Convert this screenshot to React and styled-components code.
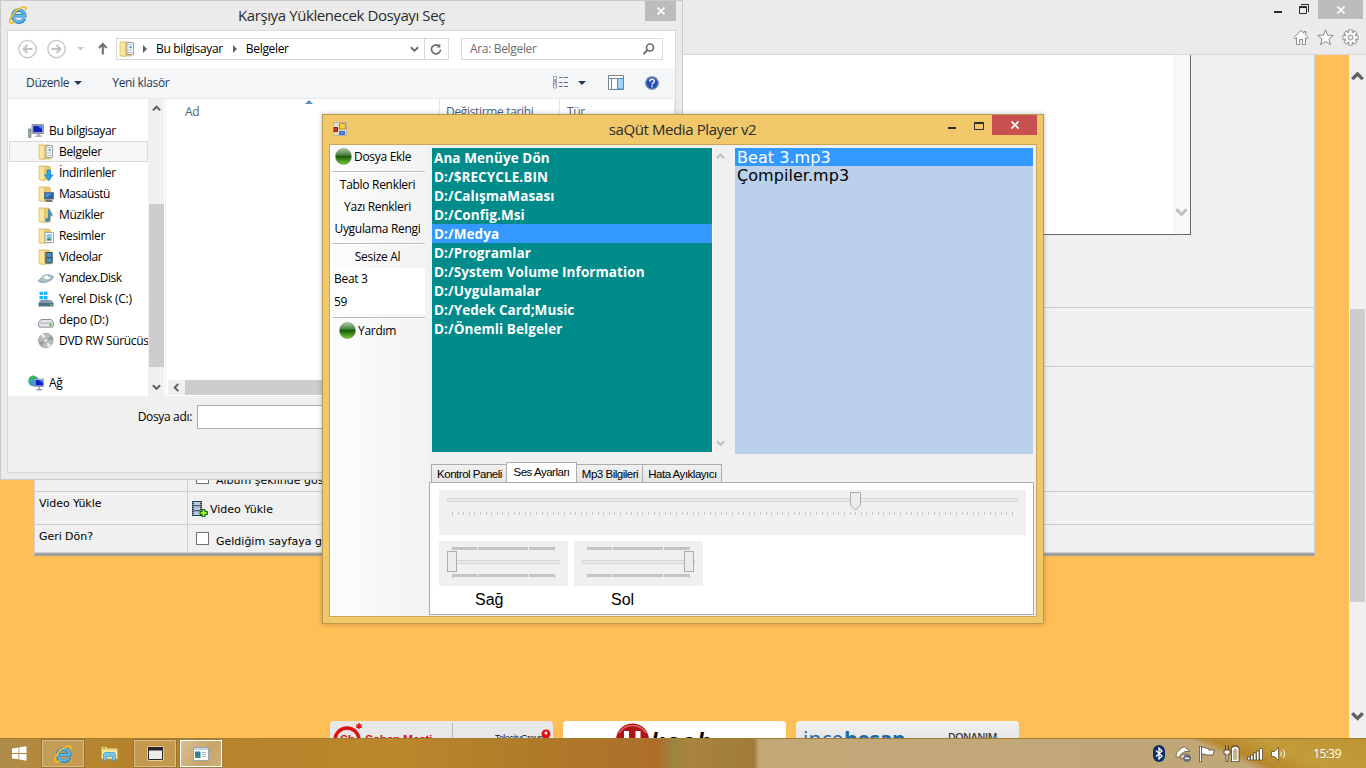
import React, { useState } from 'react'
import styled, { createGlobalStyle, css } from 'styled-components'

const GlobalStyle = createGlobalStyle`
    * {
        box-sizing: border-box;
    }
    body {
        margin: 0;
        overflow: hidden;
        font-family: "Open Sans", "Noto Sans", sans-serif;
        font-size: 12px;
        letter-spacing: -0.33px;
        color: #000;
        cursor: default;
    }
    svg {
        display: block;
        flex: none;
    }
`

const Desktop = styled.div`
    position: relative;
    width: 1366px;
    height: 768px;
    overflow: hidden;
    display: flex;
    flex-direction: column;
    white-space: nowrap;
`

/* ---------- browser ---------- */

const Browser = styled.div`
    height: 738px;
    display: flex;
    flex-direction: column;
    background: #ebebeb;
`
const BrowserTop = styled.div`
    height: 55px;
    flex: none;
    border-bottom: 1px solid #d9d9d9;
    display: flex;
    flex-direction: column;
    align-items: flex-end;
`
const BrowserButtons = styled.div`
    height: 19px;
    display: flex;
    align-items: flex-start;
    padding-right: 3px;
`
const CloseButton = styled.div`
    width: ${props => props.$width}px;
    height: ${props => props.$height}px;
    background: ${props => props.$color || '#bcbcbc'};
    display: flex;
    align-items: center;
    justify-content: center;
`
const BrowserTools = styled.div`
    display: flex;
    gap: 8px;
    padding: 10px 7px 0 0;
`
const Viewport = styled.div`
    flex: 1;
    min-height: 0;
    display: flex;
`
const Page = styled.div`
    flex: 1;
    min-width: 0;
    overflow: hidden;
    background: #ffbf57;
    display: flex;
    flex-direction: column;
`
const Table = styled.div`
    width: 1281px;
    height: 501px;
    flex: none;
    margin-left: 34px;
    background: #f0f0f0;
    border: solid #cfcfcf;
    border-width: 0 1px 0 1px;
    border-bottom: 3px solid #a0a0a0;
    font-family: "DejaVu Sans", Verdana, sans-serif;
    font-size: 11px;
    letter-spacing: 0;
`
const TableRow = styled.div`
    display: flex;
    height: ${props => props.$height}px;
    border-bottom: 1px solid #cfcfcf;
`
const TableLabel = styled.div`
    width: 153px;
    padding: 5px 0 0 4px;
    border-right: 1px solid #cfcfcf;
    letter-spacing: -0.05px;
`
const TableCell = styled.div`
    flex: 1;
    display: flex;
    align-items: ${props => props.$align || 'flex-start'};
    padding: ${props => props.$padding || '0'};
`
const CellText = styled.span`
    margin: ${props => props.$margin || '0'};
`
const TextArea = styled.div`
    width: 999px;
    height: 180px;
    margin-left: 4px;
    background: #fff;
    border: solid #696969;
    border-width: 0 1px 1px 0;
    display: flex;
    justify-content: flex-end;
`
const TextAreaScroll = styled.div`
    width: 17px;
    background: #f8f8f8;
    display: flex;
    align-items: flex-end;
    justify-content: center;
    padding: 0 1px 15px 0;
`
const CheckBox = styled.span`
    width: 13px;
    height: 13px;
    flex: none;
    background: #fff;
    border: 1px solid #707070;
    margin-right: 7px;
`
const PageScroll = styled.div`
    width: 17px;
    background: #f0f0f0;
    display: flex;
    flex-direction: column;
    align-items: center;
    padding: 15px 0;
`
const PageThumb = styled.div`
    width: 15px;
    height: 293px;
    margin-top: 226px;
    margin-bottom: auto;
    background: #cdcdcd;
`
const Sponsors = styled.div`
    display: flex;
    gap: 10px;
    margin: 165px 0 0 330px;
`
const Sponsor = styled.div`
    width: 223px;
    height: 60px;
    flex: none;
    border-radius: 4px;
    background: ${props => props.$background};
`

/* ---------- file dialog ---------- */

const Dialog = styled.div`
    position: absolute;
    left: 0;
    top: 0;
    width: 683px;
    height: 480px;
    background: #ebebeb;
    border: 1px solid #cacaca;
    padding: 0 6px 6px;
    display: flex;
    flex-direction: column;
`
const DialogTitle = styled.div`
    height: 29px;
    flex: none;
    display: flex;
    align-items: flex-start;
`
const Caption = styled.div`
    flex: 1;
    text-align: center;
    padding-left: ${props => props.$shift}px;
    font-size: 15px;
    letter-spacing: -0.4px;
    line-height: 28px;
    color: #2b2b2b;
`
const DialogClient = styled.div`
    flex: 1;
    min-height: 0;
    border: 1px solid #d9d9d9;
    background: #f0f0f0;
    display: flex;
    flex-direction: column;
`
const AddressBar = styled.div`
    height: 37px;
    flex: none;
    background: #fff;
    display: flex;
    align-items: center;
    padding: 0 12px 1px 10px;
`
const Field = styled.div`
    display: flex;
    align-items: center;
    height: 22px;
    width: ${props => props.$width}px;
    border: 1px solid #d9d9d9;
    background: #fff;
`
const Crumb = styled.span`
    margin: 0 8px 1px 7px;
`
const RefreshCell = styled.div`
    width: 25px;
    height: 20px;
    border-left: 1px solid #d9d9d9;
    display: flex;
    align-items: center;
    justify-content: center;
`
const SearchText = styled.span`
    flex: 1;
    padding: 0 0 1px 8px;
    color: #6d6d6d;
`
const CommandBar = styled.div`
    height: 31px;
    flex: none;
    display: flex;
    align-items: center;
    padding: 0 16px 0 18px;
    background: #f5f6f7;
    border-bottom: 1px solid #e5e8eb;
    color: #1e395b;
`
const CommandText = styled.span`
    margin-right: ${props => props.$gap || 0}px;
    padding-bottom: 1px;
`
const CommandIcons = styled.svg`
    margin-left: auto;
`
const DialogBody = styled.div`
    height: 297px;
    flex: none;
    display: flex;
    background: #fff;
`
const Tree = styled.div`
    width: 141px;
    overflow: hidden;
    padding: 21px 0 0 1px;
`
const TreeRow = styled.div`
    display: flex;
    align-items: center;
    gap: 5px;
    width: 139px;
    height: 21px;
    margin-top: ${props => props.$top || 0}px;
    padding-left: ${props => props.$root ? 18 : 28}px;
    border: 1px solid ${props => props.$selected ? '#dadada' : 'transparent'};
    background: ${props => props.$selected ? '#f7f7f7' : 'transparent'};
    letter-spacing: ${props => props.$spacing || -0.33}px;
`
const TreeScroll = styled.div`
    width: 16px;
    background: #f0f0f0;
    display: flex;
    flex-direction: column;
    align-items: center;
    padding: 5px 0 4px;
`
const TreeThumb = styled.div`
    width: 15px;
    height: 163px;
    margin-top: auto;
    margin-bottom: 16px;
    background: #cdcdcd;
`
const FileArea = styled.div`
    flex: 1;
    border-left: 1px solid #f0f0f0;
    margin-left: 1px;
    display: flex;
    flex-direction: column;
    justify-content: space-between;
`
const FileHeader = styled.div`
    display: flex;
    color: #4c607a;
`
const HeaderCell = styled.div`
    width: ${props => props.$width}px;
    height: 25px;
    padding-left: ${props => props.$indent || 6}px;
    line-height: 26px;
    border-right: 1px solid #e5e8eb;
    display: flex;
`
const SortMark = styled.svg`
    margin: 1px 0 0 106px;
`
const FileScroll = styled.div`
    height: 16px;
    display: flex;
    align-items: flex-start;
    margin-left: 2px;
    background: #f0f0f0;
    border-bottom: 1px solid #fff;
`
const FileScrollArrow = styled.div`
    width: 17px;
    height: 15px;
    display: flex;
    align-items: center;
    justify-content: center;
`
const FileThumb = styled.div`
    flex: 1;
    height: 15px;
    background: #cdcdcd;
`
const DialogFooter = styled.div`
    display: flex;
    align-items: center;
    justify-content: flex-end;
    padding: 9px 12px 0 0;
    gap: 5px;
`
const NameLabel = styled.span`
    padding-bottom: 2px;
`
const NameInput = styled.div`
    width: 466px;
    height: 24px;
    background: #fff;
    border: 1px solid #abadb3;
`

/* ---------- media player ---------- */

const Player = styled.div`
    position: absolute;
    left: 322px;
    top: 114px;
    width: 722px;
    height: 510px;
    background: #f0c869;
    border: 1px solid #b99a4c;
    box-shadow: 0 0 5px rgba(0, 0, 0, 0.25);
    padding: 0 6px 6px;
    display: flex;
    flex-direction: column;
`
const PlayerTitle = styled.div`
    height: 29px;
    flex: none;
    display: flex;
    align-items: flex-start;
`
const PlayerClient = styled.div`
    flex: 1;
    min-height: 0;
    border: 1px solid #c9a654;
    background: #f0f0f0;
    display: flex;
`
const MenuStrip = styled.div`
    width: 99px;
    padding-top: 1px;
    background: linear-gradient(90deg, #fdfdfd, #f2f2f2);
    letter-spacing: -0.3px;
`
const MenuItem = styled.div`
    width: 95px;
    height: ${props => props.$height || 22}px;
    display: flex;
    align-items: center;
    justify-content: ${props => props.$left ? 'flex-start' : 'center'};
    gap: 2px;
    padding: 0 0 2px ${props => props.$left || 0}px;
    margin-left: ${props => props.$shift || 0}px;
    ${props => props.$box && css`
        background: #fff;
    `}
`
const MenuLine = styled.div`
    width: 93px;
    height: 1px;
    margin: 3px 0 2px 2px;
    background: #bdbdbd;
    box-shadow: 0 1px 0 #fff;
`
const Main = styled.div`
    flex: 1;
    display: flex;
    flex-direction: column;
    padding: 3px 2px 0 0;
`
const Lists = styled.div`
    display: flex;
    height: 306px;
    margin-left: 3px;
`
const FolderList = styled.div`
    width: 281px;
    height: 304px;
    background: #008b8b;
    border-right: 1px solid #fff;
    font-size: 13.5px;
    font-weight: 700;
    letter-spacing: 0.08px;
    color: #fff;
`
const FolderRow = styled.div`
    height: 19px;
    line-height: 21px;
    padding-left: 2px;
    background: ${props => props.$selected ? '#3399ff' : 'transparent'};
`
const ListScroll = styled.div`
    width: 16px;
    height: 304px;
    display: flex;
    flex-direction: column;
    align-items: center;
    justify-content: space-between;
    padding: 4px 1px 4px 0;
`
const SongList = styled.div`
    width: 298px;
    height: 306px;
    margin-left: 6px;
    background: #bad0eb;
    font-family: "DejaVu Sans", Verdana, sans-serif;
    font-size: 16px;
    letter-spacing: 0.05px;
`
const SongRow = styled.div`
    height: 18px;
    line-height: 20px;
    padding-left: 2px;
    background: ${props => props.$selected ? '#3399ff' : 'transparent'};
    color: ${props => props.$selected ? '#fff' : '#000'};
`
const Tabs = styled.div`
    display: flex;
    align-items: flex-end;
    height: 28px;
    padding-left: 2px;
    font-family: "Liberation Sans", Arial, sans-serif;
    font-size: 11.5px;
    letter-spacing: -0.48px;
`
const Tab = styled.div`
    width: ${props => props.$width}px;
    height: 18px;
    padding-left: 1px;
    border: 1px solid #acacac;
    border-width: 1px 1px 0 ${props => props.$first ? 1 : 0}px;
    background: linear-gradient(#f0f0f0, #e5e5e5);
    text-align: center;
    line-height: 19px;
    ${props => props.$active && css`
        height: 21px;
        padding-left: 0;
        margin-bottom: -1px;
        background: #fff;
        border-left-width: 1px;
        margin-left: -1px;
    `}
`
const TabPage = styled.div`
    height: 133px;
    width: 605px;
    background: #fff;
    border: 1px solid #acacac;
    padding: 7px 7px 0 9px;
`
const TrackBar = styled.div`
    width: ${props => props.$width}px;
    height: 45px;
    background: #f0f0f0;
`
const Channels = styled.div`
    display: flex;
    gap: 6px;
    margin-top: 6px;
`
const Channel = styled.div`
    display: flex;
    flex-direction: column;
`
const ChannelName = styled.div`
    padding: 4px 0 0 ${props => props.$indent}px;
    font-family: "Liberation Sans", Arial, sans-serif;
    font-size: 16px;
    line-height: 19px;
    letter-spacing: 0;
`

/* ---------- taskbar ---------- */

const Taskbar = styled.div`
    height: 30px;
    flex: none;
    display: flex;
    align-items: center;
    border-top: 1px solid #a17c32;
    background:
        linear-gradient(24deg, transparent 510px, #b8872c 518px, #c39c3a 540px, #bd9432 100%) no-repeat,
        linear-gradient(90deg, #ae8c4c 0, #b58735 60px, #b5822b 130px, #ba872c 400px, #b07c28 520px, #ad6e2c 660px,
        #9c8340 672px, #a8843f 690px, #a07b3a 754px, #c2a877 759px, #c0a778 1366px);
`
const StartButton = styled.div`
    width: 41px;
    display: flex;
    justify-content: center;
    padding-right: 2px;
`
const TaskButton = styled.div`
    width: 44px;
    height: 29px;
    margin-right: 2px;
    display: flex;
    align-items: center;
    justify-content: center;
    ${props => props.$open && css`
        border: 1px solid rgba(110, 75, 20, 0.5);
        background: rgba(255, 235, 200, 0.22);
        box-shadow: inset 0 0 0 1px #dcbc86;
    `}
    ${props => props.$active && css`
        background: linear-gradient(120deg, #dac294, #c8a468 60%, #d0b078);
        box-shadow: inset 0 0 0 1px #fff;
    `}
`
const Tray = styled.div`
    margin-left: auto;
    display: flex;
    align-items: center;
    gap: 7px;
    padding-right: 25px;
`
const Clock = styled.span`
    color: #fff;
    margin-left: 19px;
    letter-spacing: -0.55px;
`

/* ---------- icons ---------- */

const Chevron = ({ dir = 'down', size = 8, color = '#606060', width = 2 }) => {
    const d = {
        down: 'M1 2.5 L5 6.5 L9 2.5',
        up: 'M1 7 L5 3 L9 7',
        left: 'M7 1 L3 5 L7 9',
    }[dir]
    return (
        <svg width={size} height={size} viewBox="0 0 10 10" fill="none" stroke={color} strokeWidth={width}>
            <path d={d} />
        </svg>
    )
}

const Triangle = ({ right, color = '#1e395b' }) => (
    <svg width="8" height="8" viewBox="0 0 8 8" fill={color}>
        <path d={right ? 'M2 0 L6 4 L2 8z' : 'M0 2 H8 L4 6z'} />
    </svg>
)

const Cross = ({ size = 8 }) => (
    <svg width={size} height={size} viewBox="0 0 8 8" stroke="#fff" strokeWidth="1.7">
        <path d="M.5 .5 L7.5 7.5 M7.5 .5 L.5 7.5" />
    </svg>
)

const WindowButtons = ({ restore }) => (
    restore
        ? <svg width="44" height="19" viewBox="0 0 44 19" fill="none" stroke="#2b2b2b">
            <path d="M0 12 H8" strokeWidth="2" />
            <path d="M25.500 6.500 H32.500 V13.500 H25.500z M25 7.500 H33" />
            <path d="M27 4.500 H34.500 V12" />
        </svg>
        : <svg width="45" height="19" viewBox="0 0 45 19" fill="none" stroke="#2b2b2b">
            <path d="M1 13 H9" strokeWidth="2" />
            <path d="M27.500 7.500 H36.500 V14.500 H27.500z M27 8.500 H37" />
        </svg>
)

const IeIcon = ({ size = 18 }) => (
    <svg width={size} height={size} viewBox="0 0 18 18" fill="none">
        <path d="M15.300 12.300 A6 6 0 1 1 15.700 9.800 H6" stroke="#2a86c8" strokeWidth="3.600" />
        <path d="M15 12.300 A5.900 5.900 0 1 1 15.600 9.800 H6" stroke="#67bfec" strokeWidth="1.800" />
        <path d="M1.300 16.500 C-.8 13 5.500 3.800 13.500 1.300 C16.500 .5 17.500 2 16.500 4.500" stroke="#f3bd1c" strokeWidth="1.700" />
        <path d="M1.200 16.500 C2.200 17.500 4.500 16.800 6 15.700" stroke="#f3bd1c" strokeWidth="1.500" />
    </svg>
)

const HomeIcon = () => (
    <svg width="16" height="17" viewBox="0 0 16 17" fill="#fff" stroke="#8b8b8b">
        <path d="M8 1.500 L.8 8.500 L2 9.800 L3.500 8.800 V15.500 H6.500 V10.500 H9.500 V15.500 H12.500 V8.800 L14 9.800 L15.200 8.500 L12.800 6.200 V2.500 H11 V4.300z" />
    </svg>
)

const StarIcon = () => (
    <svg width="17" height="17" viewBox="0 0 17 17" fill="#fff" stroke="#8b8b8b">
        <path d="M8.500 .8 L10.600 6.200 L16.300 6.400 L11.900 10 L13.500 15.700 L8.500 12.500 L3.500 15.700 L5.100 10 L.7 6.400 L6.400 6.200z" />
    </svg>
)

const GearIcon = () => (
    <svg width="17" height="17" viewBox="0 0 17 17">
        <g stroke="#8b8b8b" strokeWidth="4.400">
            <path d="M8.500 .5 V16.500 M.5 8.500 H16.500 M2.900 2.900 L14.100 14.100 M14.100 2.900 L2.900 14.100" />
        </g>
        <circle cx="8.500" cy="8.500" r="6" fill="#8b8b8b" />
        <g stroke="#fff" strokeWidth="2.400">
            <path d="M8.500 1.300 V15.700 M1.300 8.500 H15.700 M3.400 3.400 L13.600 13.600 M13.600 3.400 L3.400 13.600" />
        </g>
        <circle cx="8.500" cy="8.500" r="5" fill="#fff" />
        <circle cx="8.500" cy="8.500" r="2.500" fill="#ebebeb" stroke="#8b8b8b" />
    </svg>
)

const NavIcons = () => (
    <svg width="98" height="22" viewBox="0 0 98 22" fill="none" stroke="#c3c3c3">
        <circle cx="9.500" cy="11" r="8.700" strokeWidth="1.300" />
        <path d="M14.500 11 H5.500 M9.500 7 L5.500 11 L9.500 15" strokeWidth="2" />
        <circle cx="38.500" cy="11" r="8.700" strokeWidth="1.300" />
        <path d="M33.500 11 H42.500 M38.500 7 L42.500 11 L38.500 15" strokeWidth="2" />
        <path d="M59 9 H66 L62.500 12.500z" fill="#c9c9c9" stroke="none" />
        <path d="M84.800 16.500 V6.500 M81 10 L84.800 6 L88.600 10" stroke="#6d6d6d" strokeWidth="2" />
    </svg>
)

const FolderIcon = ({ kind }) => (
    <svg width="16" height="16" viewBox="0 0 16 16">
        <path d="M1.500 1 H11 L12.500 2.500 V15 H1.500z" fill="#e8cb70" stroke="#cfae55" strokeWidth=".6" />
        <path d="M1 1 L6.500 1.500 V15.500 L1 14.500z" fill="#f8e5a0" stroke="#d8b95f" strokeWidth=".7" />
        {kind === 'doc' && <g>
            <path d="M8 1.500 H14.500 V13.500 H8z" fill="#fbfbfb" stroke="#a3a39b" />
            <path d="M9 3.500 H13.500 M9 9 H13.500 M9 11.500 H13.500 M9 6 H10.500" stroke="#b4bec8" />
            <path d="M10.800 5.200 H12.800 V7.200 H10.800z" fill="#3a8ee0" />
        </g>}
        {kind === 'down' && <path d="M9 5 H12.500 V10 H15 L10.700 15.500 L6.500 10 H9z" fill="#2aa5f0" stroke="#147ac4" strokeWidth=".7" />}
        {kind === 'desk' && <g>
            <path d="M6.500 6.500 H15.500 V13 H6.500z" fill="#2a62a8" stroke="#5b6d80" strokeWidth=".8" />
            <path d="M7.500 7.500 H14 L8 12z" fill="#4c93de" />
            <path d="M7.500 15 H14.500" stroke="#4a5868" strokeWidth="1.500" />
        </g>}
        {kind === 'music' && <path d="M10.500 2 C11 5 15 5 14 9.500 C13.800 8 12.500 7.500 11.900 7.500 V12.500 C11.500 15.500 7 15.500 7.500 12.800 C7.800 11.300 9.500 11 10.500 11.500z" fill="#2e93dd" stroke="#1b6bb0" strokeWidth=".5" />}
        {kind === 'pic' && <g>
            <path d="M7 4.500 H15.500 V14.500 H7z" fill="#fff" stroke="#9aa0a6" strokeWidth=".9" />
            <path d="M8.500 6 H14 V12.500 H8.500z" fill="#8cc9ea" />
            <path d="M8.500 12.500 L10.500 9.500 L14 12.500z" fill="#3f8f62" />
        </g>}
        {kind === 'video' && <g>
            <path d="M7 3 H15 V14.500 H7z" fill="#3d434b" />
            <path d="M8.800 4 H13.200 V8.200 H8.800z M8.800 9.300 H13.200 V13.500 H8.800z" fill="#3f94cf" />
            <path d="M7.800 3.500 V14.500 M14.200 3.500 V14.500" stroke="#e6e6e6" strokeDasharray="1 1" />
        </g>}
    </svg>
)

const PcIcon = () => (
    <svg width="16" height="16" viewBox="0 0 16 16">
        <path d="M.5 6 H3 V14.500 H.5z" fill="#a5acb4" stroke="#6d7680" strokeWidth=".7" />
        <path d="M1.200 8 H2.500" stroke="#3fae4a" />
        <path d="M4 1.500 H15.500 V10.500 H4z" fill="#c5ccd4" stroke="#7a858f" strokeWidth=".8" />
        <path d="M5.200 2.700 H14.300 V9.300 H5.200z" fill="#1423b4" />
        <path d="M9 2.700 H14.300 V6.500z" fill="#4e77e8" />
        <path d="M9 11 H12 V12.500 H14 V14 H7 V12.500 H9z" fill="#aab2ba" />
    </svg>
)

const NetworkIcon = () => (
    <svg width="16" height="16" viewBox="0 0 16 16">
        <circle cx="5.500" cy="6" r="5.300" fill="#2b9ee0" />
        <path d="M1 3.500 C3 0 6 0 8 1.500 L5 5 L2.500 4.500 L3 9 L1.200 8z" fill="#43b649" />
        <path d="M6.500 4 H15.700 V11.500 H6.500z" fill="#c5ccd4" stroke="#7a858f" strokeWidth=".7" />
        <path d="M7.500 5 H15 V10.500 H7.500z" fill="#0a1fd0" />
        <path d="M11 5 H15 V8z" fill="#5a83f0" />
        <path d="M10.500 12 H12 V14 H14 V15.500 H8.500 V14 H10.500z" fill="#8e9bb0" />
    </svg>
)

const DriveIcon = ({ kind }) => (
    <svg width="16" height="16" viewBox="0 0 16 16">
        {kind === 'yandex' && <g>
            <path d="M.5 10.500 L6 5.500 C9 4 13.500 4.500 15.700 7 C14 10 10 12.500 5 12.500 C2 12.500 .5 12 .5 10.500z" fill="#a9c0c6" stroke="#75909a" strokeWidth=".7" />
            <path d="M5 7.500 L8.500 5 L12.500 8 C10 10 7 9.500 5 7.500z" fill="#f2f7f8" />
        </g>}
        {kind === 'win' && <g>
            <path d="M1.500 .8 H5 V4 H1.500z M6 .5 H9.500 V4 H6z M1.500 5 H5 V8.300 H1.500z M6 5 H9.500 V8.500 H6z" fill="#19bdf2" />
            <path d="M.5 11.500 L3 9 H13 L15.500 11.500 V15.500 H.5z" fill="#8799a5" />
            <path d="M.8 12 H15.200 V15.200 H.8z" fill="#4d7287" />
            <path d="M12.500 12.800 H14.300 V14.500 H12.500z" fill="#54e338" />
        </g>}
        {kind === 'disk' && <g>
            <path d="M.6 11 C1 8.500 3 7.500 4 7.500 H12 C13.500 7.500 15 8.500 15.400 11 V14 C15.400 15 15 15.200 14.500 15.200 H1.500 C1 15.200 .6 15 .6 14z" fill="#e6e6ea" stroke="#85858c" strokeWidth=".9" />
            <path d="M1.500 11 H14.500" stroke="#a8a8ae" />
            <path d="M11.500 11.800 H13.500 V14.200 H11.500z" fill="#44c421" />
        </g>}
        {kind === 'dvd' && <g>
            <circle cx="7.800" cy="7.500" r="7.300" fill="#b9bcbd" stroke="#8f9394" strokeWidth=".7" />
            <path d="M7.800 7.500 L2.500 2.300 A7.300 7.300 0 0 1 6 .4z M7.800 7.500 L13.200 12.500 A7.300 7.300 0 0 1 9.800 14.500z" fill="#e9ebea" />
            <path d="M7.800 7.500 L.8 9 A7.300 7.300 0 0 0 3.500 13.300z M7.800 7.500 L13.500 2.500 A7 7 0 0 1 15 6.500z" fill="#989c9d" />
            <circle cx="7.800" cy="7.500" r="2.200" fill="#e8e8e8" stroke="#a5a5a5" />
        </g>}
    </svg>
)

const GreenBall = () => (
    <svg width="17" height="17" viewBox="0 0 17 17">
        <defs>
            <linearGradient id="ball" x1="0" y1="0" x2="0" y2="1">
                <stop offset="0" stopColor="#b5cba8" />
                <stop offset=".42" stopColor="#3f7f35" />
                <stop offset=".5" stopColor="#1c5a0c" />
                <stop offset="1" stopColor="#71cf2c" />
            </linearGradient>
        </defs>
        <circle cx="8.500" cy="8.500" r="8" fill="url(#ball)" stroke="#70906a" strokeWidth=".6" />
    </svg>
)

const FormIcon = () => (
    <svg width="14" height="14" viewBox="0 0 14 14">
        <path d="M.5 .5 H13.500 V13.500 H.5z" fill="#e6dac0" stroke="#b5b5b5" />
        <path d="M1 5.500 H4.500 V9.500 H1z" fill="#d03a2c" stroke="#8c1c14" />
        <path d="M6.500 1.500 H12.500 V7 H6.500z" fill="#ffcf3a" stroke="#c08a1c" />
        <path d="M6.500 9.500 H11.500 V12.500 H6.500z" fill="#4f8bf0" stroke="#3b66c0" />
    </svg>
)

const VideoAddIcon = () => (
    <svg width="16" height="16" viewBox="0 0 16 16">
        <path d="M0 0 H10 V15 H0z" fill="#2c3e52" />
        <path d="M2 1 H8 V4.300 H2z M2 5.300 H8 V9.300 H2z M2 10.300 H8 V14 H2z" fill="#b9c9d8" />
        <path d="M1.200 1 V15 M9 1 V15" stroke="#dfe6ec" strokeDasharray="1 1" />
        <path d="M10 8.500 H13 V10.500 H15.500 V13.500 H13 V15.700 H10 V13.500 H8 V10.500 H10z" fill="#56d12a" stroke="#0c6a0c" />
        <path d="M11.500 9.500 V14.500 M9 12 H14.500" stroke="#e8f03a" />
    </svg>
)

const MainTrack = () => (
    <svg width="587" height="45" viewBox="0 0 587 45">
        <path d="M8.500 8.500 H578.500 V11.500 H8.500z" fill="#e7eaea" stroke="#d6d6d6" />
        {Array.from({ length: 101 }, (_, i) => (
            <rect key={i} x={Math.round(13 + i * 5.6)} y="22" width="1" height={i % 100 === 0 ? 4 : 3} fill="#c4c4c4" />
        ))}
        <path d="M411.500 2.500 H421.500 V15 L416.500 20 L411.500 15z" fill="#ececec" stroke="#acacac" />
    </svg>
)

const ChannelTrack = ({ thumb }) => (
    <svg width="129" height="45" viewBox="0 0 129 45">
        <path d="M8.500 19.500 H120.500 V22.500 H8.500z" fill="#e7eaea" stroke="#d6d6d6" />
        <g fill="#c4c4c4">
            <path d="M13 5 H14 V6 H38 V9 H13z M39 6 H89 V9 H39z M90 6 H115 V5 H116 V9 H90z" />
            <path d="M13 33 H38 V36 H14 V37 H13z M39 33 H89 V36 H39z M90 33 H116 V37 H115 V36 H90z" />
        </g>
        <rect x={thumb + 0.5} y="10.500" width="9" height="20" fill="#ececec" stroke="#acacac" />
    </svg>
)

const TrayIcons = () => (
    <svg width="136" height="20" viewBox="0 0 136 20">
        <rect x="2" y="1" width="12" height="17" rx="6" fill="#0b2f66" />
        <path d="M5 6.500 L11 12 L8 15 V4 L11 7 L5 12.500" fill="none" stroke="#fff" strokeWidth="1.300" />
        <path d="M25.500 9 L30.500 4 L33.500 2.800 L39 7.500 L34 7.500 L30 10 L28 13 H25z" fill="#fff" stroke="#6b5a38" strokeWidth=".8" />
        <path d="M29.500 14.500 C29 9 39 8.500 39.500 13.500z" fill="#f4f1ea" stroke="#6b5a38" strokeWidth=".9" />
        <circle cx="36" cy="14.300" r="3.800" fill="#6b7178" />
        <path d="M34 14.300 H38" stroke="#fff" strokeWidth="1.300" />
        <path d="M49.500 2 V18" stroke="#4f3f20" strokeWidth="2.800" />
        <path d="M49.500 2.500 V17.500" stroke="#fff" strokeWidth="1.400" />
        <path d="M50.500 3.500 C53 2 55 5 57.500 4.500 L58 6 H63.500 L62 11 H57.500 C55 11.500 53.500 9 50.500 10.500z" fill="#fff" stroke="#4f3f20" strokeWidth=".8" />
        <path d="M74.500 1.500 V6 M77.500 1.500 V6 M73 6 H79 V10 H77 V17.500 H75 V10 H73z" fill="#fff" stroke="#4f3f20" strokeWidth=".9" />
        <path d="M81.500 4.500 H83 V3 H85.500 V4.500 H87 V16.500 H81.500z" fill="#4f3f20" stroke="#4f3f20" strokeWidth="3" />
        <path d="M81.500 4.500 H83 V3.300 H85.500 V4.500 H87 V16.500 H81.500z" fill="#c7b284" stroke="#fff" strokeWidth="1.300" />
        <g fill="#fff" stroke="#4f3f20" strokeWidth=".7">
            <path d="M96.500 13 H99 V16 H96.500z M99.500 11 H102 V16 H99.500z M102.500 9 H105 V16 H102.500z M105.500 7 H108 V16 H105.500z M108.500 4.500 H111.500 V16 H108.500z" />
            <path d="M120.500 7.500 H123.500 L127.500 3.500 V16.500 L123.500 12.500 H120.500z" />
        </g>
        <path d="M129.500 7.500 C130.500 9 130.500 11 129.500 12.500 M132 5.500 C134 8 134 12 132 14.500" fill="none" stroke="#fff" />
    </svg>
)

const RedSponsor = () => (
    <svg width="223" height="60" viewBox="0 0 223 60">
        <circle cx="17" cy="19" r="12" fill="none" stroke="#e0120f" strokeWidth="3.500" />
        <text x="10" y="23" fontSize="12" fontWeight="700" fill="#e0120f" fontFamily="Liberation Sans">Sh</text>
        <path d="M29 2 V8 M26.200 3.700 L31.800 6.500 M31.800 3.700 L26.200 6.500" stroke="#e0120f" strokeWidth="1.400" />
        <text x="35" y="23" fontSize="12" fontWeight="700" fill="#e0120f" fontFamily="Liberation Sans" textLength="67">Sohen Mecti</text>
        <path d="M122.500 2 V60" stroke="#b9b9b9" />
        <text x="165" y="20" fontSize="8.500" fill="#111" fontFamily="Liberation Sans" textLength="48">TelecityGroup</text>
        <circle cx="216" cy="13" r="4.500" fill="#e0120f" />
        <circle cx="216" cy="12" r="1.500" fill="#fff" />
    </svg>
)

const TrackSponsor = () => (
    <svg width="223" height="60" viewBox="0 0 223 60">
        <circle cx="69.500" cy="19" r="16.500" fill="#b01217" />
        <path d="M56 12 A16 16 0 0 1 83 12" fill="none" stroke="#dd6a66" strokeWidth="1.500" />
        <path d="M63.500 10 V26 M63.500 17 C63.500 24 74 24 75 17 M75 10 V26" fill="none" stroke="#fff" strokeWidth="5" />
        <text x="88" y="29" fontSize="23" fontWeight="700" fontStyle="italic" fill="#000" fontFamily="Liberation Sans" textLength="60">kach</text>
    </svg>
)

const HardwareSponsor = () => (
    <svg width="223" height="60" viewBox="0 0 223 60">
        <text x="7" y="26" fontSize="21" fill="#1668ab" fontFamily="Open Sans" textLength="40">ince</text>
        <text x="48" y="26" fontSize="21" fontWeight="700" fill="#1668ab" fontFamily="Open Sans" textLength="61">hesap</text>
        <text x="152" y="19.500" fontSize="10.500" fontWeight="600" fill="#333" fontFamily="Open Sans" textLength="49">DONANIM</text>
    </svg>
)

/* ---------- data ---------- */

const treeItems = [
    { name: 'Belgeler', icon: <FolderIcon kind="doc" /> },
    { name: 'İndirilenler', icon: <FolderIcon kind="down" /> },
    { name: 'Masaüstü', icon: <FolderIcon kind="desk" />, spacing: -0.45 },
    { name: 'Müzikler', icon: <FolderIcon kind="music" /> },
    { name: 'Resimler', icon: <FolderIcon kind="pic" /> },
    { name: 'Videolar', icon: <FolderIcon kind="video" /> },
    { name: 'Yandex.Disk', icon: <DriveIcon kind="yandex" />, spacing: -0.5 },
    { name: 'Yerel Disk (C:)', icon: <DriveIcon kind="win" />, spacing: -0.2 },
    { name: 'depo (D:)', icon: <DriveIcon kind="disk" />, spacing: -0.15 },
    { name: 'DVD RW Sürücüs', icon: <DriveIcon kind="dvd" /> },
]

const folders = [
    'Ana Menüye Dön',
    'D:/$RECYCLE.BIN',
    'D:/CalışmaMasası',
    'D:/Config.Msi',
    'D:/Medya',
    'D:/Programlar',
    'D:/System Volume Information',
    'D:/Uygulamalar',
    'D:/Yedek Card;Music',
    'D:/Önemli Belgeler',
]

const songs = ['Beat 3.mp3', 'Çompiler.mp3']

const tabs = [
    { name: 'Kontrol Paneli', width: 76 },
    { name: 'Ses Ayarları', width: 71 },
    { name: 'Mp3 Bilgileri', width: 66 },
    { name: 'Hata Ayıklayıcı', width: 79 },
]

/* ---------- windows ---------- */

const BrowserWindow = () => (
    <Browser>
        <BrowserTop>
            <BrowserButtons>
                <WindowButtons restore />
                <CloseButton $width={45} $height={19}><Cross /></CloseButton>
            </BrowserButtons>
            <BrowserTools>
                <HomeIcon />
                <StarIcon />
                <GearIcon />
            </BrowserTools>
        </BrowserTop>
        <Viewport>
            <Page>
                <Table>
                    <TableRow $height={253}>
                        <TableLabel />
                        <TableCell>
                            <TextArea>
                                <TextAreaScroll>
                                    <Chevron size={13} color="#bfbfbf" width={2.3} />
                                </TextAreaScroll>
                            </TextArea>
                        </TableCell>
                    </TableRow>
                    <TableRow $height={59}>
                        <TableLabel />
                        <TableCell />
                    </TableRow>
                    <TableRow $height={125}>
                        <TableLabel />
                        <TableCell $align="flex-end" $padding="0 0 7px 8px">
                            <CheckBox />
                            <CellText $margin="0 0 -3px">Albüm şeklinde gös</CellText>
                        </TableCell>
                    </TableRow>
                    <TableRow $height={33}>
                        <TableLabel>Video Yükle</TableLabel>
                        <TableCell $align="center" $padding="2px 0 0 4px">
                            <VideoAddIcon />
                            <CellText $margin="0 0 0 2px">Video Yükle</CellText>
                        </TableCell>
                    </TableRow>
                    <TableRow $height={28}>
                        <TableLabel>Geri Dön?</TableLabel>
                        <TableCell $padding="7px 0 0 8px">
                            <CheckBox />
                            <CellText $margin="3px 0 0">Geldiğim sayfaya g</CellText>
                        </TableCell>
                    </TableRow>
                </Table>
                <Sponsors>
                    <Sponsor $background="#e8e8e8"><RedSponsor /></Sponsor>
                    <Sponsor $background="#fff"><TrackSponsor /></Sponsor>
                    <Sponsor $background="linear-gradient(#f2f2f2, #dcdcdc 30px)"><HardwareSponsor /></Sponsor>
                </Sponsors>
            </Page>
            <PageScroll>
                <Chevron dir="up" size={13} width={2.6} />
                <PageThumb />
                <Chevron size={13} width={2.6} />
            </PageScroll>
        </Viewport>
    </Browser>
)

const FileDialog = () => (
    <Dialog>
        <DialogTitle>
            <svg width="20" height="24" viewBox="0 0 20 24">
                <g transform="translate(2 5)"><IeIcon /></g>
            </svg>
            <Caption $shift={11}>Karşıya Yüklenecek Dosyayı Seç</Caption>
            <CloseButton $width={31} $height={20}><Cross /></CloseButton>
        </DialogTitle>
        <DialogClient>
            <AddressBar>
                <NavIcons />
                <Field $width={333}>
                    <svg width="20" height="16" viewBox="-2 0 20 16"><FolderIcon kind="doc" /></svg>
                    <svg width="12" height="8" viewBox="-5 0 12 8" fill="#606060"><path d="M1 0 L5 4 L1 8z" /></svg>
                    <Crumb>Bu bilgisayar</Crumb>
                    <Triangle right color="#606060" />
                    <Crumb>Belgeler</Crumb>
                    <svg width="113" height="1" />
                    <Chevron size={9} />
                    <svg width="5" height="1" />
                    <RefreshCell>
                        <svg width="12" height="12" viewBox="0 0 12 12" fill="none" stroke="#6d6d6d" strokeWidth="1.700">
                            <path d="M9.500 3.500 A4.500 4.500 0 1 0 10.500 6.500" />
                            <path d="M10.300 .5 V4.500 H6.500z" fill="#6d6d6d" stroke="none" />
                        </svg>
                    </RefreshCell>
                </Field>
                <svg width="12" height="1" />
                <Field $width={202}>
                    <SearchText>Ara: Belgeler</SearchText>
                    <svg width="20" height="14" viewBox="0 0 20 14" fill="none" stroke="#6d6d6d">
                        <circle cx="8" cy="5.500" r="3.500" strokeWidth="1.700" />
                        <path d="M5.500 8 L1.500 12" strokeWidth="2" />
                    </svg>
                </Field>
            </AddressBar>
            <CommandBar>
                <CommandText $gap={5}>Düzenle</CommandText>
                <Triangle />
                <svg width="30" height="1" />
                <CommandText>Yeni klasör</CommandText>
                <CommandIcons width="92" height="18" viewBox="0 0 92 18">
                    <path d="M.5 2.500 H3.500 V5.500 H.5z M.5 6.500 H3.500 V10 H.5z M.5 11 H3.500 V14 H.5z" fill="#fff" stroke="#7d8aa0" strokeWidth=".8" />
                    <path d="M1.500 8 H2.700" stroke="#d03030" strokeWidth="1.500" />
                    <path d="M6 3.500 H9.500 M11 3.500 H15 M6 8.500 H9.500 M11 8.500 H15 M6 12.500 H9.500 M11 12.500 H15" stroke="#5b6b87" />
                    <path d="M25 7 H33 L29 11z" fill="#1e395b" />
                    <path d="M55.500 1.500 H70.500 V15.500 H55.500z" fill="#fff" stroke="#77828c" />
                    <path d="M55.500 4.500 H70.500 M58.500 4.500 V15.500" stroke="#77828c" fill="none" />
                    <path d="M64.500 4.500 H70.500 V15 H64.500z" fill="#9ed3fb" stroke="#3a92dc" />
                </CommandIcons>
                <svg width="14" height="14" viewBox="0 0 14 14">
                    <circle cx="7" cy="7" r="6.400" fill="#2350b8" stroke="#8e9db5" strokeWidth="1.200" />
                    <path d="M4.800 5.500 C4.800 2.500 9.400 2.600 9.300 5.300 C9.200 6.800 7.200 6.800 7.100 8.600 M7.100 9.800 V11.300" fill="none" stroke="#fff" strokeWidth="1.500" />
                </svg>
            </CommandBar>
            <DialogBody>
                <Tree>
                    <TreeRow $root><PcIcon />Bu bilgisayar</TreeRow>
                    {treeItems.map((item, i) => (
                        <TreeRow key={item.name} $selected={i === 0} $spacing={item.spacing}>{item.icon}{item.name}</TreeRow>
                    ))}
                    <TreeRow $root $top={21}><NetworkIcon />Ağ</TreeRow>
                </Tree>
                <TreeScroll>
                    <Chevron dir="up" size={9} width={2.2} />
                    <TreeThumb />
                    <Chevron size={9} width={2.2} />
                </TreeScroll>
                <FileArea>
                    <FileHeader>
                        <HeaderCell $width={274} $indent={19}>
                            Ad
                            <SortMark width="8" height="4" viewBox="0 0 8 4"><path d="M0 4 L4 0 L8 4z" fill="#5a8fb5" /></SortMark>
                        </HeaderCell>
                        <HeaderCell $width={120}>Değiştirme tarihi</HeaderCell>
                        <HeaderCell $width={115} $indent={7}>Tür</HeaderCell>
                    </FileHeader>
                    <FileScroll>
                        <FileScrollArrow><Chevron dir="left" size={9} width={2.2} /></FileScrollArrow>
                        <FileThumb />
                    </FileScroll>
                </FileArea>
            </DialogBody>
            <DialogFooter>
                <NameLabel>Dosya adı:</NameLabel>
                <NameInput />
            </DialogFooter>
        </DialogClient>
    </Dialog>
)

const PlayerWindow = () => {
    const [folder, setFolder] = useState('D:/Medya')
    const [song, setSong] = useState('Beat 3.mp3')
    const [tab, setTab] = useState('Ses Ayarları')
    return (
        <Player>
            <PlayerTitle>
                <svg width="60" height="24" viewBox="0 0 60 24">
                    <g transform="translate(4 7)"><FormIcon /></g>
                </svg>
                <Caption $shift={29}>saQüt Media Player v2</Caption>
                <WindowButtons />
                <CloseButton $width={45} $height={20} $color="#c75050"><Cross /></CloseButton>
            </PlayerTitle>
            <PlayerClient>
                <MenuStrip>
                    <MenuItem $left={5}>
                        <GreenBall />Dosya Ekle
                    </MenuItem>
                    <MenuLine />
                    <MenuItem>Tablo Renkleri</MenuItem>
                    <MenuItem>Yazı Renkleri</MenuItem>
                    <MenuItem>Uygulama Rengi</MenuItem>
                    <MenuLine />
                    <MenuItem>Sesize Al</MenuItem>
                    <MenuItem $left={4} $box $height={23}>Beat 3</MenuItem>
                    <MenuItem $left={4} $box $height={23}>59</MenuItem>
                    <MenuLine />
                    <MenuItem $left={5} $shift={4}>
                        <GreenBall />Yardım
                    </MenuItem>
                </MenuStrip>
                <Main>
                    <Lists>
                        <FolderList>
                            {folders.map(name => (
                                <FolderRow key={name} $selected={name === folder} onClick={() => setFolder(name)}>{name}</FolderRow>
                            ))}
                        </FolderList>
                        <ListScroll>
                            <Chevron dir="up" size={9} color="#bfbfbf" width={2.2} />
                            <Chevron size={9} color="#bfbfbf" width={2.2} />
                        </ListScroll>
                        <SongList>
                            {songs.map(name => (
                                <SongRow key={name} $selected={name === song} onClick={() => setSong(name)}>{name}</SongRow>
                            ))}
                        </SongList>
                    </Lists>
                    <Tabs>
                        {tabs.map((item, i) => (
                            <Tab key={item.name} $width={item.width} $first={i === 0} $active={item.name === tab} onClick={() => setTab(item.name)}>
                                {item.name}
                            </Tab>
                        ))}
                    </Tabs>
                    <TabPage>
                        <TrackBar $width={587}><MainTrack /></TrackBar>
                        <Channels>
                            <Channel>
                                <TrackBar $width={129}><ChannelTrack thumb={8} /></TrackBar>
                                <ChannelName $indent={36}>Sağ</ChannelName>
                            </Channel>
                            <Channel>
                                <TrackBar $width={129}><ChannelTrack thumb={110} /></TrackBar>
                                <ChannelName $indent={37}>Sol</ChannelName>
                            </Channel>
                        </Channels>
                    </TabPage>
                </Main>
            </PlayerClient>
        </Player>
    )
}

const App = () => {
    return (
        <>
            <GlobalStyle />
            <Desktop>
                <BrowserWindow />
                <Taskbar>
                    <StartButton>
                        <svg width="15" height="15" viewBox="0 0 15 15" fill="#fff">
                            <path d="M0 2.500 L6.500 1.500 V7 H0z M7.300 1.300 L14.500 .3 V7 H7.300z M0 8 H6.500 V13.300 L0 12.400z M7.300 8 H14.500 V14.700 L7.300 13.600z" />
                        </svg>
                    </StartButton>
                    <TaskButton $open><IeIcon size={18} /></TaskButton>
                    <TaskButton>
                        <svg width="17" height="17" viewBox="0 0 17 17">
                            <path d="M.5 2 H5 L6.500 3.500 H16.500 V14 H.5z" fill="#f2dc86" stroke="#d2b04e" strokeWidth=".7" />
                            <path d="M1 6 H16 V13 H1z" fill="#f9ebac" />
                            <path d="M2.500 15.500 V9.500 C2.500 8 3.500 7.500 5 7.500 H12 C14 7.500 14.500 8.500 14.500 9.500 V15.500 H11.500 V11.500 H5.500 V15.500z" fill="#7cc5e8" stroke="#3f93c4" strokeWidth=".7" />
                            <path d="M2 3.500 H4" stroke="#3fae3a" />
                        </svg>
                    </TaskButton>
                    <TaskButton $open>
                        <svg width="17" height="15" viewBox="0 0 17 15">
                            <path d="M1 1 H16 V14 H1z" fill="#e9e4da" stroke="#fff" />
                            <path d="M1.500 1.500 H15.500 V13.500 H1.500z" fill="#f0ede6" stroke="#26262a" />
                            <path d="M1 1 H16 V4.500 H1z" fill="#26262a" />
                        </svg>
                    </TaskButton>
                    <TaskButton $open $active>
                        <svg width="16" height="14" viewBox="0 0 16 14">
                            <path d="M.5 .5 H15.500 V13.500 H.5z" fill="#fff" stroke="#98a4b0" />
                            <path d="M1 1 H15 V3 H1z" fill="#c5d3e2" />
                            <path d="M2 4.500 H7.500 V11 H2z" fill="#2f7f9c" />
                            <path d="M2 8 L7.500 11 H2z" fill="#3f9a58" />
                            <path d="M9 5.500 H13 M9 7.500 H13 M9 9.500 H13" stroke="#aab2ba" />
                        </svg>
                    </TaskButton>
                    <Tray>
                        <TrayIcons />
                        <Clock>15:39</Clock>
                    </Tray>
                </Taskbar>
                <FileDialog />
                <PlayerWindow />
            </Desktop>
        </>
    )
}

export default App
